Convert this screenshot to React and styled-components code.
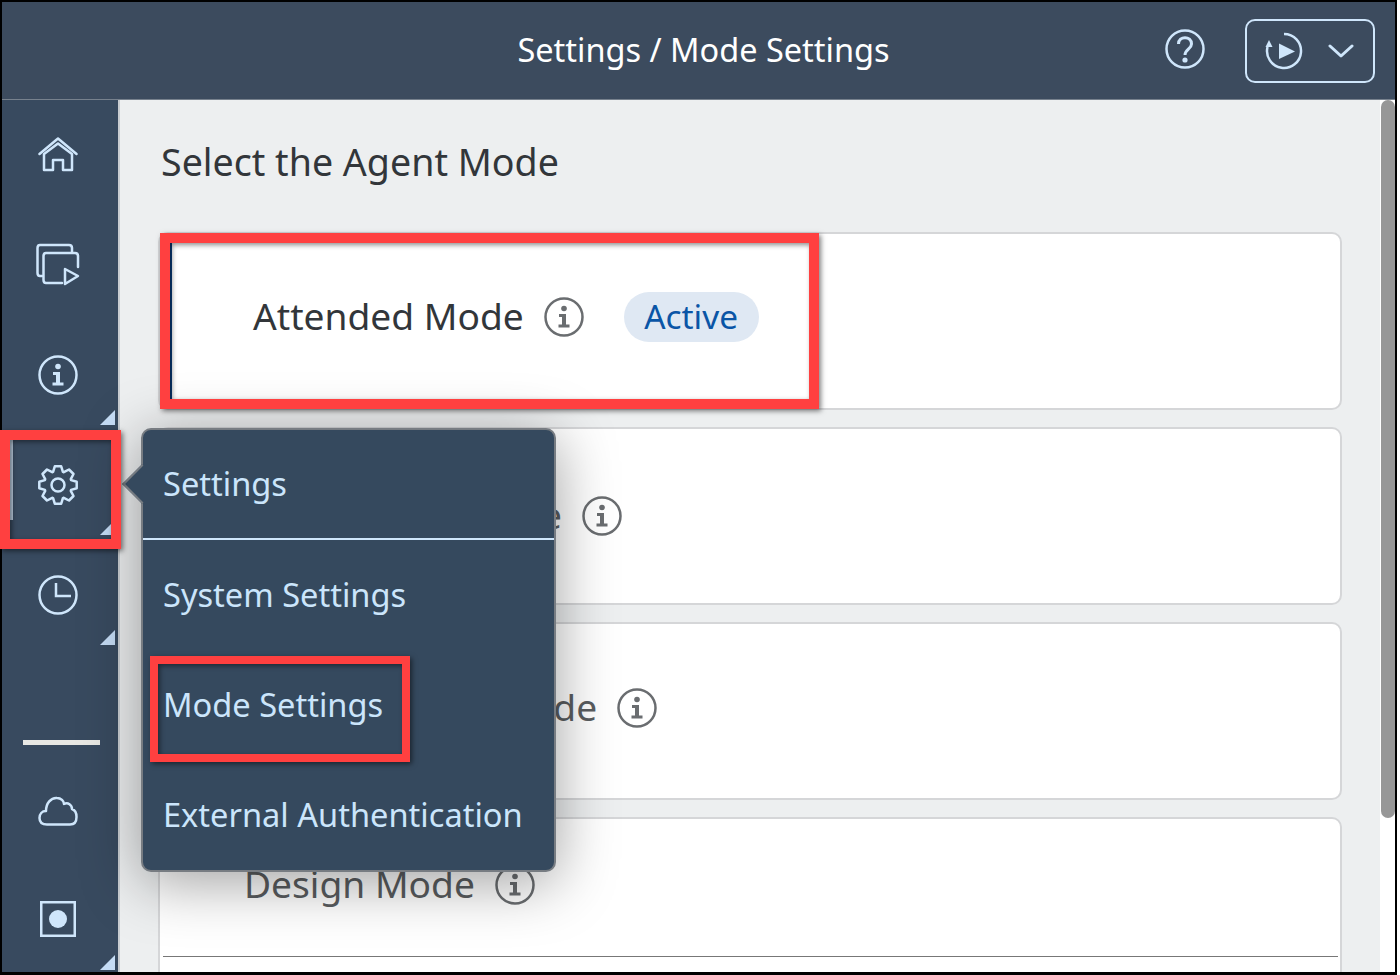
import React from 'react'
import styled, { createGlobalStyle } from 'styled-components'

const GlobalStyle = createGlobalStyle`
  html, body {
    margin: 0;
    background: #fff;
    font-family: "Noto Sans", "Open Sans", sans-serif;
  }
`

const Frame = styled.div`
  width: 1397px;
  height: 975px;
  box-sizing: border-box;
  border: solid #000;
  border-width: 2px 2px 3px 2px;
  display: flex;
  flex-direction: column;
`

const Header = styled.header`
  height: 98px;
  flex-shrink: 0;
  box-sizing: border-box;
  border-bottom: 1px solid #77818d;
  background: #3c4b5e;
  display: grid;
  grid-template-columns: 1fr auto 1fr;
  align-items: center;
  padding-left: 10px;
  color: #fff;
`

const HeaderTitle = styled.div`
  grid-column: 2;
  font-size: 32.5px;
  padding-bottom: 2px;
`

const HeaderActions = styled.div`
  grid-column: 3;
  justify-self: end;
  display: flex;
  align-items: center;
  gap: 40px;
  padding-right: 20px;
  color: #cfe6fb;
`

const HelpWrap = styled.span`
  display: flex;
  margin-bottom: 4px;
`

const ModeButton = styled.div`
  width: 130px;
  height: 64px;
  box-sizing: border-box;
  border: 2px solid #cfe6fb;
  border-radius: 10px;
  display: flex;
  align-items: center;
  padding-left: 17px;
  gap: 24px;
`

const Main = styled.div`
  flex: 1;
  display: flex;
  position: relative;
  min-height: 0;
`

const Sidebar = styled.nav`
  width: 116px;
  flex-shrink: 0;
  background: #384a5f;
  border-right: 2px solid #c9cdd1;
  color: #cfe6fb;
  display: flex;
  flex-direction: column;
`

const NavItem = styled.div`
  height: ${p => p.$height || 110}px;
  flex-shrink: 0;
  box-sizing: border-box;
  padding-right: 5px;
  position: relative;
  display: flex;
  align-items: center;
  justify-content: center;
  ${p => p.$active && `
    &::before {
      content: '';
      position: absolute;
      left: 8px;
      top: 10px;
      bottom: 20px;
      width: 3px;
      background: #b9cadd;
    }
  `}
`

const Corner = styled.span`
  position: absolute;
  right: 3px;
  bottom: ${p => p.$bottom ?? 5}px;
  width: 15px;
  height: 15px;
  background: #c5dcf5;
  clip-path: polygon(100% 0, 100% 100%, 0 100%);
`

const NavRule = styled.div`
  height: 5px;
  width: 77px;
  margin: 90px 0 11px 21px;
  background: #e8e8e4;
  flex-shrink: 0;
`

const Content = styled.main`
  flex: 1;
  min-width: 0;
  overflow: hidden;
  background: #edeff0;
  padding: 37px 38px 0 38px;
`

const PageTitle = styled.h1`
  margin: 0 0 45px 3px;
  font-size: 37.6px;
  font-weight: 400;
  line-height: 50px;
  color: #32363a;
`

const CardList = styled.div`
  display: flex;
  flex-direction: column;
  gap: 17px;
`

const Card = styled.section`
  height: 178px;
  flex-shrink: 0;
  box-sizing: border-box;
  position: relative;
  background: #fff;
  border: 2px solid #d5d6d8;
  border-radius: 10px;
  padding-top: ${p => p.$top}px;
  padding-left: ${p => p.$left || 84}px;
  padding-right: 2px;
`

const SelectedBar = styled.span`
  position: absolute;
  left: 10px;
  top: 9px;
  bottom: 9px;
  width: 2px;
  background: #0a3d7c;
`

const ModeRow = styled.div`
  display: flex;
  align-items: center;
  height: 50px;
  gap: 20px;
  color: ${p => (p.$dim ? '#5a5d60' : '#32363a')};
  font-size: 37.15px;
  white-space: nowrap;
`

const ModeName = styled.span`
  padding-bottom: 3px;
`

const InfoWrap = styled.span`
  display: flex;
  color: #6a6d70;
`

const ActiveBadge = styled.span`
  margin-left: 20px;
  height: 50px;
  box-sizing: border-box;
  padding: 0 20.5px 2px;
  border-radius: 25px;
  background: #dfe8f3;
  color: #0a55a6;
  font-size: 33.4px;
  display: flex;
  align-items: center;
`

const CardRule = styled.div`
  height: 1px;
  margin: 46px 0 0 -81px;
  background: #777;
`

const Scrollbar = styled.div`
  width: 15px;
  flex-shrink: 0;
  background: #fff;
`

const ScrollThumb = styled.div`
  height: 718px;
  margin-left: 1px;
  width: 14px;
  border-radius: 7px;
  background: #979797;
`

const Callout = styled.div`
  position: absolute;
  box-sizing: border-box;
  border: ${p => p.$thick || 10}px solid #ff4040;
  box-shadow: 2px 2px 5px rgba(0, 0, 0, 0.5), inset 2px 2px 5px rgba(0, 0, 0, 0.45);
  pointer-events: none;
  z-index: 3;
`

const CardCallout = styled(Callout)`
  left: 0;
  top: -1px;
  width: 659px;
  height: 176px;
`

const GearCallout = styled(Callout)`
  left: -2px;
  top: 0;
  width: 121px;
  height: 119px;
`

const MenuCallout = styled(Callout)`
  left: 7px;
  top: 6px;
  width: 260px;
  height: 106px;
`

const Popover = styled.div`
  position: absolute;
  left: 139px;
  top: 328px;
  width: 415px;
  height: 444px;
  box-sizing: border-box;
  background: #35495e;
  border: 2px solid #777c82;
  border-radius: 10px;
  box-shadow: 0 10px 60px rgba(0, 0, 0, 0.38);
  color: #cbe5fb;
  font-size: 32.6px;
  z-index: 2;

  &::before {
    content: '';
    position: absolute;
    left: -15px;
    top: 40px;
    width: 28px;
    height: 28px;
    box-sizing: border-box;
    background: #35495e;
    border-left: 2px solid #777c82;
    border-bottom: 2px solid #777c82;
    transform: rotate(45deg);
  }
`

const PopoverHead = styled.div`
  height: 110px;
  box-sizing: border-box;
  padding: 0 0 1px 20px;
  display: flex;
  align-items: center;
  border-bottom: 2px solid #cfe6fb;
  position: relative;
`

const PopoverItem = styled.div`
  height: 110px;
  box-sizing: border-box;
  padding: 0 0 2px 20px;
  display: flex;
  align-items: center;
  position: relative;
  white-space: nowrap;
`

const Icon = ({ w = 40, h = 40, sw = 2.5, children }) => (
  <svg width={w} height={h} viewBox={`0 0 ${w} ${h}`} fill="none" stroke="currentColor" strokeWidth={sw} strokeLinecap="round" strokeLinejoin="round">
    {children}
  </svg>
)

const HomeIcon = () => (
  <Icon h={36}>
    <path d="M1.5 17 L20 1.5 L38.5 17" />
    <path d="M6 17 L20 6.5 L34 17 V33 H25 V23 H15 V33 H6 Z" />
  </Icon>
)

const MediaIcon = () => (
  <Icon w={44} h={44}>
    <path d="M6 33 H4 Q1.5 33 1.5 30 V5 Q1.5 2 4 2 H33 Q36 2 36 5 V9" />
    <path d="M26 40 H10 Q7.5 40 7.5 37 V13 Q7.5 10 10 10 H39 Q42 10 42 13 V24" />
    <path d="M29 26 L42 33 L29 41 Z" />
  </Icon>
)

const InfoIcon = () => (
  <Icon>
    <circle cx="20" cy="20" r="18.5" />
    <circle cx="20" cy="11.5" r="2.8" fill="currentColor" stroke="none" />
    <path d="M15 17 H22 V27.5 H25.5 V30.5 H14.5 V27.5 H18 V20 H15 Z" fill="currentColor" stroke="none" />
  </Icon>
)

// 8 teeth, one pointing straight up
const gearPath = () => {
  const pts = []
  for (let i = 0; i < 8; i++) {
    const a = (i * Math.PI) / 4 - Math.PI / 2
    const at = (r, d) => `${(20 + r * Math.cos(a + d)).toFixed(1)} ${(20 + r * Math.sin(a + d)).toFixed(1)}`
    pts.push(at(14, -0.36), at(19, -0.17), at(19, 0.17), at(14, 0.36))
  }
  return `M${pts.join(' L')} Z`
}

const GearIcon = () => (
  <Icon>
    <path d={gearPath()} />
    <circle cx="20" cy="20" r="6.5" />
  </Icon>
)

const ClockIcon = () => (
  <Icon>
    <circle cx="20" cy="20" r="18.5" />
    <path d="M18 8 V21 H33" strokeLinecap="butt" strokeLinejoin="miter" />
  </Icon>
)

const CloudIcon = () => (
  <Icon h={30}>
    <path d="M9 28.5 C4 28.5 1.5 26 1.5 22 C1.5 18 4 15 8 15 C8 7 13 1.5 19 2 C23 2 26 5 26 8 C30 6 34 9 34 13 C37 14 38.5 17 38.5 21 C38.5 26 36 28.5 32 28.5 Z" />
  </Icon>
)

const RecordIcon = () => (
  <Icon w={36} h={36}>
    <rect x="1.25" y="1.25" width="33.5" height="33.5" strokeLinejoin="miter" />
    <circle cx="18" cy="18" r="9" fill="currentColor" stroke="none" />
  </Icon>
)

const HelpIcon = () => (
  <Icon>
    <circle cx="20" cy="20" r="18.5" />
    <path d="M13.5 15 C13.5 6.5 26.5 6.5 26.5 15 C26.5 20 20 20.5 20 26" strokeLinecap="butt" strokeWidth="3" />
    <circle cx="20" cy="31" r="2.6" fill="currentColor" stroke="none" />
  </Icon>
)

const ReplayIcon = () => (
  <Icon>
    <path d="M20 3 A17 17 0 1 1 3.5 16" strokeLinecap="butt" />
    <path d="M5 9 L1.5 16 H8.5 Z" fill="currentColor" stroke="none" />
    <path d="M15 12.5 L31 20.5 L15 28 Z" fill="currentColor" stroke="none" />
  </Icon>
)

const ChevronIcon = () => (
  <Icon w={26} h={14} sw={3}>
    <path d="M2 2 L13 12 L24 2" />
  </Icon>
)

export default function App() {
  return (
    <>
      <GlobalStyle />
      <Frame>
        <Header>
          <HeaderTitle>Settings / Mode Settings</HeaderTitle>
          <HeaderActions>
            <HelpWrap><HelpIcon /></HelpWrap>
            <ModeButton>
              <ReplayIcon />
              <ChevronIcon />
            </ModeButton>
          </HeaderActions>
        </Header>
        <Main>
          <Sidebar>
            <NavItem><HomeIcon /></NavItem>
            <NavItem><MediaIcon /></NavItem>
            <NavItem><InfoIcon /><Corner /></NavItem>
            <NavItem $active>
              <GearIcon />
              <Corner />
              <GearCallout />
            </NavItem>
            <NavItem><ClockIcon /><Corner /></NavItem>
            <NavRule />
            <NavItem><CloudIcon /></NavItem>
            <NavItem $height={106}><RecordIcon /><Corner $bottom={2} /></NavItem>
          </Sidebar>
          <Content>
            <PageTitle>Select the Agent Mode</PageTitle>
            <CardList>
              <Card $top={58} $left={93}>
                <SelectedBar />
                <CardCallout />
                <ModeRow>
                  <ModeName>Attended Mode</ModeName>
                  <InfoWrap><InfoIcon /></InfoWrap>
                  <ActiveBadge>Active</ActiveBadge>
                </ModeRow>
              </Card>
              <Card $top={62}>
                <ModeRow $dim>
                  <ModeName>Unattended Mode</ModeName>
                  <InfoWrap><InfoIcon /></InfoWrap>
                </ModeRow>
              </Card>
              <Card $top={59}>
                <ModeRow $dim>
                  <ModeName>Attended Plus Mode</ModeName>
                  <InfoWrap><InfoIcon /></InfoWrap>
                </ModeRow>
              </Card>
              <Card $top={41}>
                <ModeRow $dim>
                  <ModeName>Design Mode</ModeName>
                  <InfoWrap><InfoIcon /></InfoWrap>
                </ModeRow>
                <CardRule />
              </Card>
            </CardList>
          </Content>
          <Scrollbar><ScrollThumb /></Scrollbar>
          <Popover>
            <PopoverHead>Settings</PopoverHead>
            <PopoverItem>System Settings</PopoverItem>
            <PopoverItem>
              Mode Settings
              <MenuCallout $thick={8} />
            </PopoverItem>
            <PopoverItem>External Authentication</PopoverItem>
          </Popover>
        </Main>
      </Frame>
    </>
  )
}
